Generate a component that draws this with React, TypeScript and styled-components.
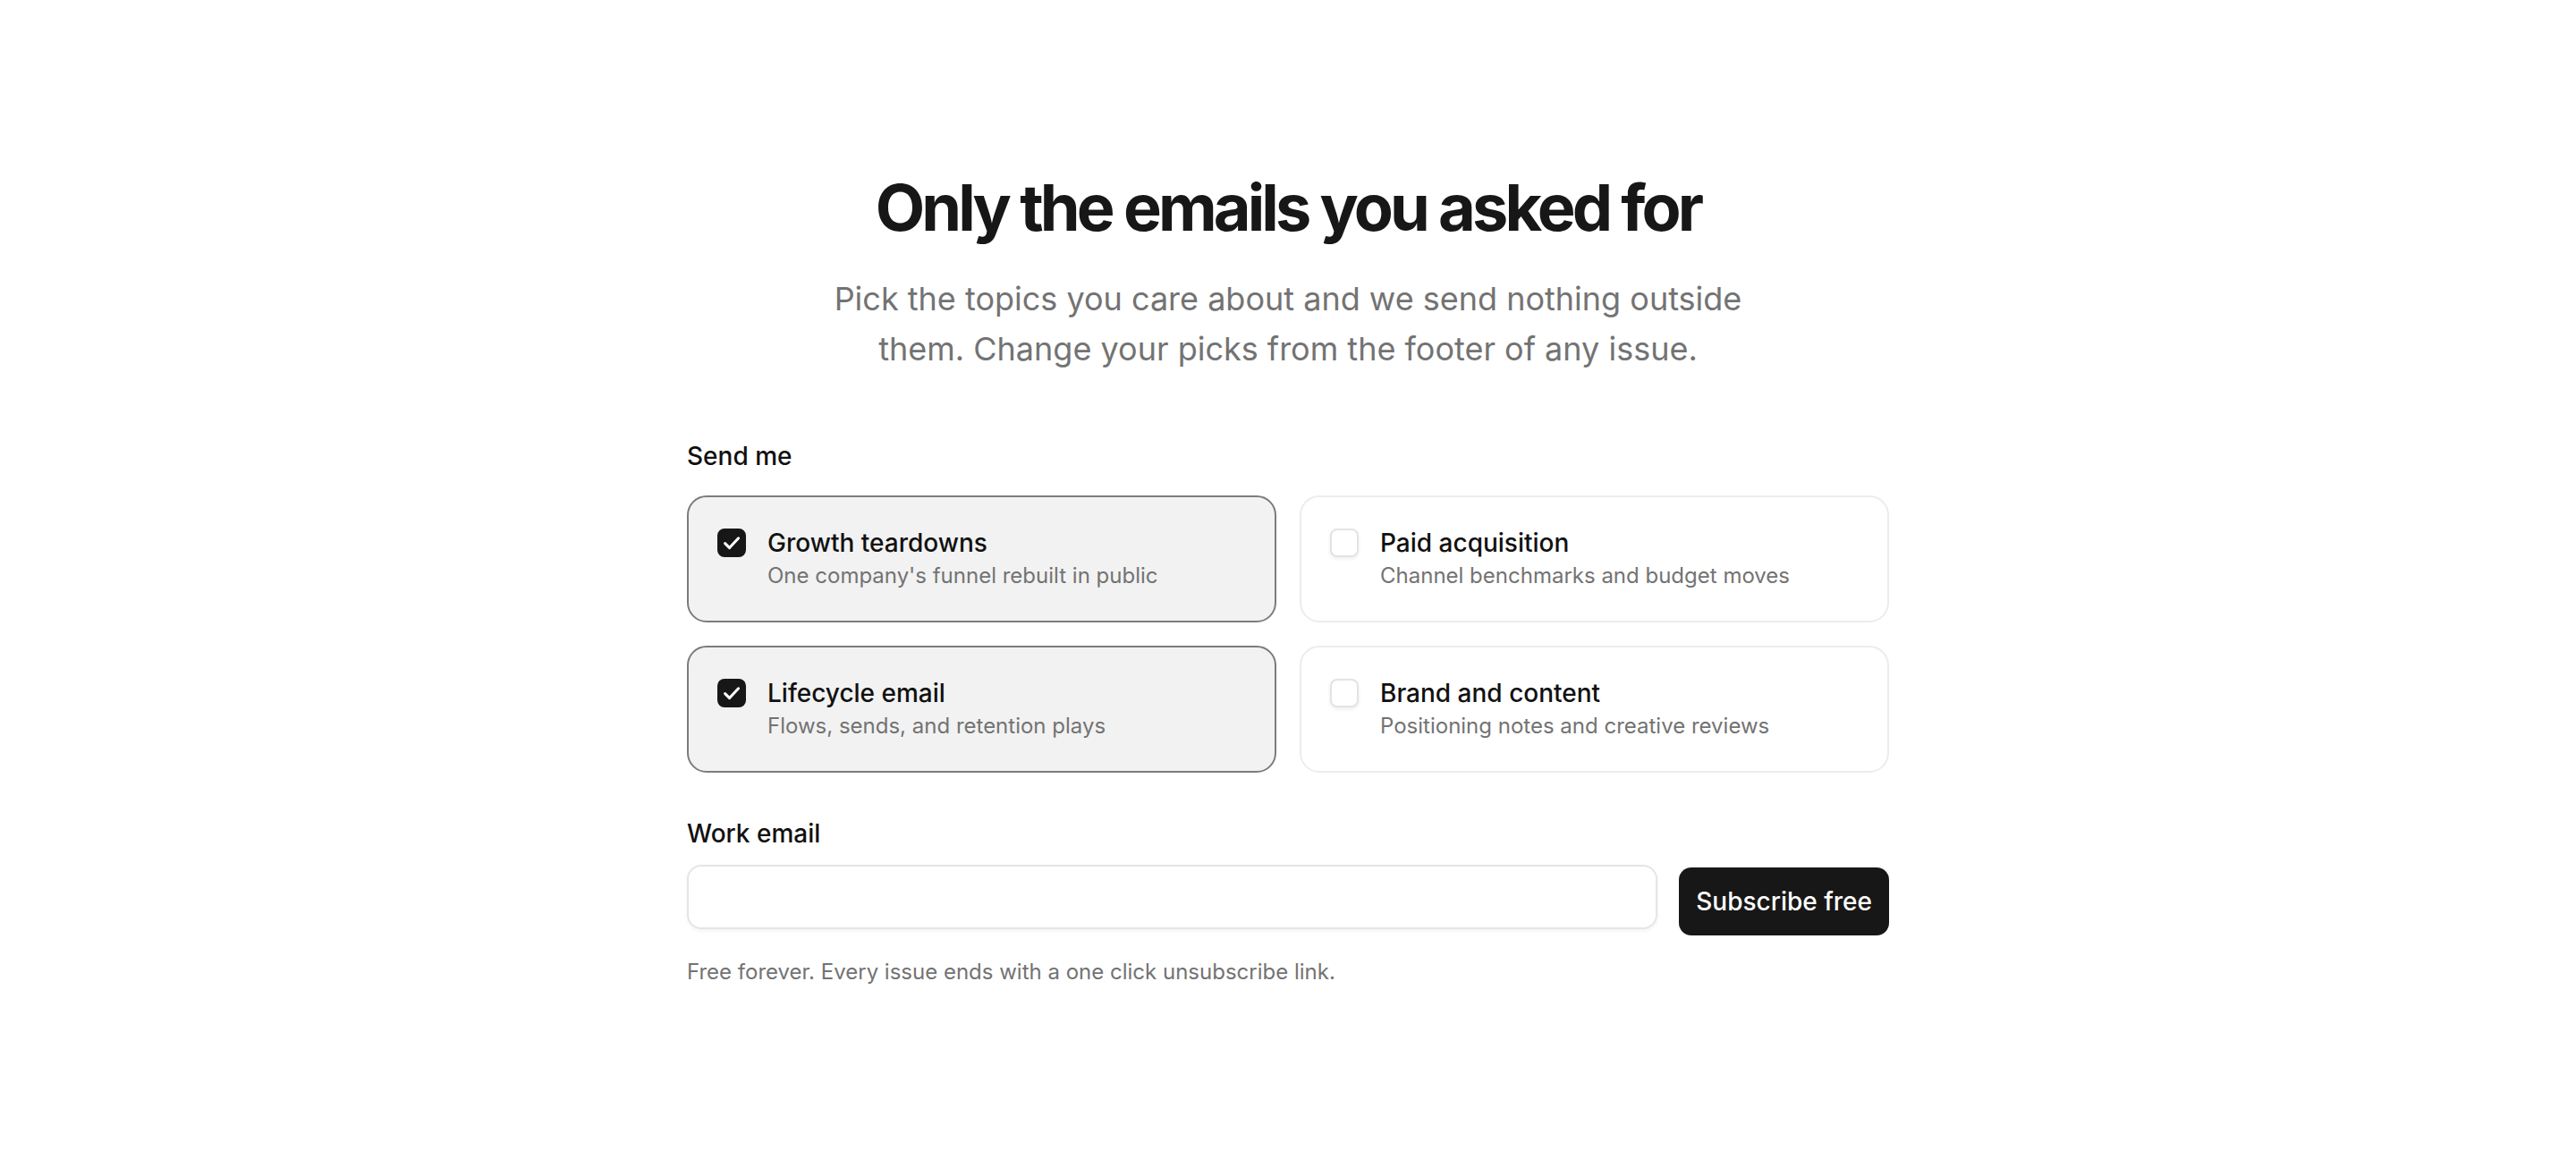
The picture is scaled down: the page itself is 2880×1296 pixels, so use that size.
import React, { useState } from "react";
import styled, { createGlobalStyle } from "styled-components";

const GlobalStyle = createGlobalStyle`
  html, body { margin: 0; padding: 0; background: #ffffff; }
  body {
    font-family: Inter, "Noto Sans", "Liberation Sans", sans-serif;
    color: #171717;
    -webkit-font-smoothing: antialiased;
  }
  * { box-sizing: border-box; }
`;

const Page = styled.main`
  min-height: 100vh;
  display: flex;
  align-items: center;
  justify-content: center;
  padding: 0 48px;
`;

const Container = styled.div`
  width: 100%;
  max-width: 1344px;
`;

const Header = styled.header`
  text-align: center;
`;

const Title = styled.h1`
  margin: 0;
  font-size: 72px;
  line-height: 80px;
  font-weight: 700;
  letter-spacing: -0.054em;
  color: #171717;
`;

const Subtitle = styled.p`
  margin: 34px auto 0;
  max-width: 1060px;
  font-size: 36px;
  line-height: 56px;
  color: #737373;
`;

const Form = styled.form`
  margin-top: 72px;
`;

const FieldLabel = styled.div`
  font-size: 28px;
  line-height: 40px;
  font-weight: 500;
  color: #111111;
  margin-bottom: 24px;
`;

const Grid = styled.div`
  display: grid;
  grid-template-columns: 1fr 1fr;
  gap: 26px;
`;

const Option = styled.label<{ $checked: boolean }>`
  display: flex;
  align-items: flex-start;
  gap: 24px;
  padding: 32px;
  border-radius: 22px;
  border: 2px solid ${(p) => (p.$checked ? "#7c7c7c" : "#ececec")};
  background: ${(p) => (p.$checked ? "#f2f2f2" : "#ffffff")};
  cursor: pointer;
`;

const HiddenInput = styled.input`
  position: absolute;
  opacity: 0;
  width: 0;
  height: 0;
`;

const Box = styled.span<{ $checked: boolean }>`
  flex: none;
  width: 32px;
  height: 32px;
  margin-top: 3px;
  border-radius: 8px;
  display: flex;
  align-items: center;
  justify-content: center;
  background: ${(p) => (p.$checked ? "#171717" : "#ffffff")};
  border: 2px solid ${(p) => (p.$checked ? "#171717" : "#e3e3e3")};
  box-shadow: ${(p) => (p.$checked ? "none" : "0 2px 4px rgba(0,0,0,0.07)")};
`;

const OptionText = styled.span`
  display: flex;
  flex-direction: column;
`;

const OptionTitle = styled.span`
  font-size: 28px;
  line-height: 38px;
  font-weight: 500;
  color: #111111;
`;

const OptionDesc = styled.span`
  font-size: 24px;
  line-height: 36px;
  color: #737373;
`;

const EmailSection = styled.div`
  margin-top: 48px;
`;

const EmailLabel = styled.label`
  display: block;
  font-size: 28px;
  line-height: 40px;
  font-weight: 500;
  color: #111111;
  margin-bottom: 15px;
`;

const Row = styled.div`
  display: flex;
  align-items: flex-start;
  gap: 24px;
`;

const EmailInput = styled.input`
  flex: 1;
  min-width: 0;
  height: 72px;
  padding: 0 24px;
  border: 2px solid #e5e5e5;
  border-radius: 16px;
  background: #ffffff;
  box-shadow: 0 2px 4px rgba(0, 0, 0, 0.05);
  font-family: inherit;
  font-size: 28px;
  color: #171717;
  outline: none;
`;

const SubmitButton = styled.button`
  flex: none;
  height: 76px;
  margin-top: 3px;
  padding: 0 19px;
  border: 0;
  border-radius: 14px;
  background: #171717;
  color: #ffffff;
  font-family: inherit;
  font-size: 28px;
  font-weight: 500;
  cursor: pointer;
`;

const Note = styled.p`
  margin: 23px 0 0;
  font-size: 24px;
  line-height: 36px;
  color: #737373;
`;

const CheckMark = () => (
  <svg width="24" height="24" viewBox="0 0 12 12" fill="none">
    <path
      d="M2.3 6.3 L4.8 8.8 L9.8 3.4"
      stroke="#ffffff"
      strokeWidth="1.5"
      strokeLinecap="round"
      strokeLinejoin="round"
    />
  </svg>
);

const topics = [
  { id: "growth", title: "Growth teardowns", desc: "One company's funnel rebuilt in public" },
  { id: "paid", title: "Paid acquisition", desc: "Channel benchmarks and budget moves" },
  { id: "lifecycle", title: "Lifecycle email", desc: "Flows, sends, and retention plays" },
  { id: "brand", title: "Brand and content", desc: "Positioning notes and creative reviews" },
];

export default function App() {
  const [picked, setPicked] = useState<Record<string, boolean>>({
    growth: true,
    paid: false,
    lifecycle: true,
    brand: false,
  });

  const toggle = (id: string) => setPicked((p) => ({ ...p, [id]: !p[id] }));

  return (
    <>
      <GlobalStyle />
      <Page>
        <Container>
          <Header>
            <Title>Only the emails you asked for</Title>
            <Subtitle>
              Pick the topics you care about and we send nothing outside them. Change your picks
              from the footer of any issue.
            </Subtitle>
          </Header>
          <Form onSubmit={(e) => e.preventDefault()}>
            <FieldLabel>Send me</FieldLabel>
            <Grid>
              {topics.map((t) => {
                const checked = !!picked[t.id];
                return (
                  <Option key={t.id} $checked={checked}>
                    <HiddenInput type="checkbox" checked={checked} onChange={() => toggle(t.id)} />
                    <Box $checked={checked}>{checked && <CheckMark />}</Box>
                    <OptionText>
                      <OptionTitle>{t.title}</OptionTitle>
                      <OptionDesc>{t.desc}</OptionDesc>
                    </OptionText>
                  </Option>
                );
              })}
            </Grid>
            <EmailSection>
              <EmailLabel htmlFor="work-email">Work email</EmailLabel>
              <Row>
                <EmailInput id="work-email" type="email" />
                <SubmitButton type="submit">Subscribe free</SubmitButton>
              </Row>
              <Note>Free forever. Every issue ends with a one click unsubscribe link.</Note>
            </EmailSection>
          </Form>
        </Container>
      </Page>
    </>
  );
}
